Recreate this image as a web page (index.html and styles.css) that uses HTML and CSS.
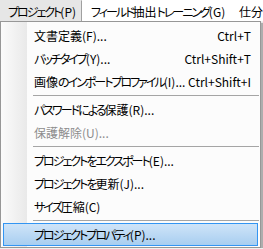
FILE: index.html
```html
<!DOCTYPE html>
<html lang="ja">
<head>
    <meta charset="UTF-8">
    <title>プロジェクト メニュー</title>
    <link rel="stylesheet" href="styles.css">
</head>
<body>
<div class="menubar">
    <div class="menubar-item open"><span class="kn">プロジェクト</span>(P)</div>
    <div class="menubar-item wide"><span class="kn">フィールド</span>抽出<span class="kn">トレーニング</span>(G)</div>
    <div class="menubar-item last">仕分</div>
</div>
<div class="dropdown">
    <div class="item"><span>文書定義(F)...</span><span class="key">Ctrl+T</span></div>
    <div class="item"><span><span class="kn">バッチタイプ</span>(Y)...</span><span class="key">Ctrl+Shift+T</span></div>
    <div class="item"><span>画像<span class="kn">のインポートプロファイル</span>(I)...</span><span class="key">Ctrl+Shift+I</span></div>
    <div class="sep"></div>
    <div class="item"><span><span class="kn">パスワードによる</span>保護(R)...</span></div>
    <div class="item disabled"><span>保護解除(U)...</span></div>
    <div class="sep"></div>
    <div class="item"><span><span class="kn">プロジェクトをエクスポート</span>(E)...</span></div>
    <div class="item"><span><span class="kn">プロジェクトを</span>更新(J)...</span></div>
    <div class="item"><span><span class="kn">サイズ</span>圧縮(C)</span></div>
    <div class="sep"></div>
    <div class="item selected"><span><span class="kn">プロジェクトプロパティ</span>(P)...</span></div>
</div>
</body>
</html>
```

FILE: styles.css
```css
body {
    margin: 0;
    background: #f0f0f0;
    font-family: "Noto Sans CJK JP", sans-serif;
    font-size: 12px;
    font-feature-settings: "palt";
    color: #000;
    overflow: hidden;
}

/* kana in Meiryo UI are much narrower than the kanji */
.kn {
    letter-spacing: -2px;
}

.menubar {
    display: flex;
    height: 21px;
    background: #fff;
    white-space: nowrap;
    overflow: hidden;
}
.menubar-item {
    flex-shrink: 0;
    padding: 0 9px 0 8px;
    line-height: 21px;
    border: 1px solid transparent;
    border-bottom: none;
    box-sizing: border-box;
}
.menubar-item.open {
    width: 82px;
    padding-left: 7px;
    background: #e6e6e6;
    border-color: #a0a0a0;
    border-top-color: #e6e6e6;
    border-left-color: #e6e6e6;
}
.menubar-item.wide {
    width: 148px;
}
.menubar-item.last {
    padding-right: 0;
    border-right: none;
}

.dropdown {
    width: 261px;
    box-sizing: border-box;
    border: 1px solid #979797;
    padding: 2px 2px 1px 2px;
    background: linear-gradient(to right, #fbfbfb, #e9e9e9) 0 0 / 26px 100% no-repeat, #fcfcfc;
    box-shadow: 2px 2px 1px rgba(0, 0, 0, 0.28);
}

.item {
    display: flex;
    justify-content: space-between;
    align-items: center;
    height: 23px;
    box-sizing: border-box;
    padding: 0 6px 0 30px;
    border: 1px solid transparent;
    white-space: nowrap;
}
.item.disabled {
    color: #8d8d8d;
}
.item.selected {
    border-color: #3395f2;
    background: linear-gradient(#cfe4f8, #a8cef0);
}

.sep {
    height: 5px;
    margin-left: 30px;
    margin-right: -1px;
    background: linear-gradient(#a5a5a5, #a5a5a5) 0 2px / 100% 1px no-repeat;
}
```
